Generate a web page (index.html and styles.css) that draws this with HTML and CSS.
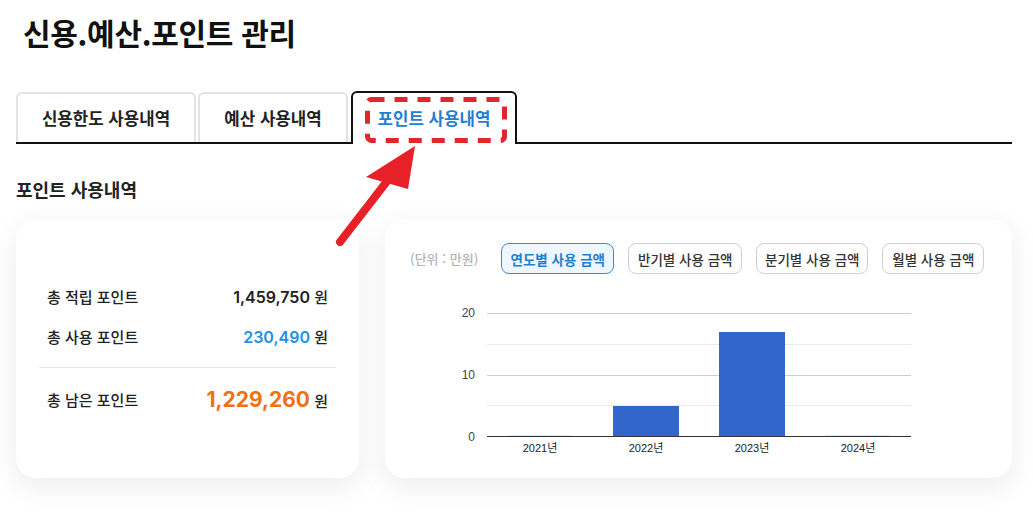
FILE: index.html
```html
<!DOCTYPE html>
<html lang="ko">
<head>
<meta charset="utf-8">
<title>신용.예산.포인트 관리</title>
<link rel="stylesheet" href="styles.css">
</head>
<body>
<div class="page">
  <h1 class="title">신용.예산.포인트 관리</h1>

  <div class="tabs">
    <div class="tab">신용한도 사용내역</div>
    <div class="tab tab-2">예산 사용내역</div>
    <div class="tab tab-active">포인트 사용내역
      <svg class="highlight" width="142" height="46" viewBox="0 0 142 46"><rect x="2.5" y="2.5" width="137" height="41" rx="4" ry="4" fill="none" stroke="#e3262b" stroke-width="5" stroke-dasharray="13 10"/></svg>
    </div>
  </div>

  <svg class="arrow" width="100" height="115" viewBox="0 0 100 115">
    <line x1="10" y1="102" x2="58" y2="40" stroke="#e82027" stroke-width="8" stroke-linecap="round"/>
    <polygon points="85,6 36,37 78,49" fill="#e82027"/>
  </svg>

  <h2 class="section-title">포인트 사용내역</h2>

  <div class="cards">
    <div class="card summary">
      <div class="row">
        <span class="label">총 적립 포인트</span>
        <span class="value"><b>1,459,750</b> 원</span>
      </div>
      <div class="row">
        <span class="label">총 사용 포인트</span>
        <span class="value"><b class="blue">230,490</b> 원</span>
      </div>
      <div class="divider"></div>
      <div class="row row-total">
        <span class="label">총 남은 포인트</span>
        <span class="value"><b class="orange">1,229,260</b> 원</span>
      </div>
    </div>

    <div class="card chart-card">
      <div class="toolbar">
        <span class="unit">(단위 : 만원)</span>
        <button class="btn btn-active w1">연도별 사용 금액</button>
        <button class="btn w2">반기별 사용 금액</button>
        <button class="btn w3">분기별 사용 금액</button>
        <button class="btn w4">월별 사용 금액</button>
      </div>

      <div class="chart">
        <div class="y-labels">
          <span>20</span>
          <span>10</span>
          <span>0</span>
        </div>
        <div class="plot">
          <div class="gridlines">
            <div class="band major"></div>
            <div class="band minor"></div>
            <div class="band major"></div>
            <div class="band minor"></div>
          </div>
          <div class="bars">
            <div class="bar zero"></div>
            <div class="bar" style="height:30px"></div>
            <div class="bar" style="height:104px"></div>
            <div class="bar zero"></div>
          </div>
        </div>
        <div></div>
        <div class="x-labels">
          <span>2021년</span>
          <span>2022년</span>
          <span>2023년</span>
          <span>2024년</span>
        </div>
      </div>
    </div>
  </div>
</div>
</body>
</html>
```

FILE: styles.css
```css
* { box-sizing: border-box; }

html, body {
  margin: 0;
  background: #ffffff;
}

body {
  font-family: "Inter", "Noto Sans CJK KR", sans-serif;
  color: #222;
}

.page {
  position: relative;
  padding: 0 21px 36px 16px;
}

.title {
  margin: 0 0 0 7px;
  padding-top: 12px;
  font-family: "Noto Sans CJK KR", sans-serif;
  font-size: 30px;
  line-height: 40px;
  font-weight: 700;
  color: #111;
  letter-spacing: -0.3px;
}

.tabs {
  margin-top: 40px;
  display: flex;
  align-items: flex-end;
  gap: 2px;
  height: 52px;
  border-bottom: 2px solid #111;
}

.tab {
  width: 180px;
  height: 50px;
  display: flex;
  align-items: center;
  justify-content: center;
  border: 2px solid #e2e2e2;
  border-bottom: none;
  border-radius: 6px 6px 0 0;
  font-family: "Noto Sans CJK KR", sans-serif;
  font-size: 16.8px;
  font-weight: 600;
  color: #222;
  background: #fff;
}

.tab-2 { width: 150px; }

.tab-active {
  position: relative;
  width: 166px;
  height: 53px;
  margin-left: 1px;
  margin-bottom: -2px;
  padding-bottom: 2px;
  border-color: #111;
  color: #1f80d2;
}

.highlight {
  position: absolute;
  left: 12px;
  top: 4px;
}

.arrow {
  position: absolute;
  left: 330px;
  top: 140px;
}

.section-title {
  margin: 33px 0 0 0;
  font-family: "Noto Sans CJK KR", sans-serif;
  font-size: 18px;
  line-height: 24px;
  font-weight: 700;
  color: #222;
}

.cards {
  margin-top: 18px;
  display: flex;
  gap: 26px;
}

.card {
  height: 259px;
  background: #fff;
  border-radius: 20px;
  box-shadow: 0 8px 30px rgba(0, 0, 0, 0.08);
}

.summary {
  width: 343px;
  padding: 57px 23px 0;
}

.row {
  height: 40px;
  padding: 0 8px;
  display: flex;
  align-items: center;
  justify-content: space-between;
}

.label {
  font-family: "Noto Sans CJK KR", sans-serif;
  font-size: 15px;
  font-weight: 500;
  color: #222;
}

.value {
  font-family: "Noto Sans CJK KR", sans-serif;
  font-size: 15px;
  font-weight: 500;
  color: #222;
}

.value b {
  font-family: "Inter", sans-serif;
  font-size: 16px;
  font-weight: 600;
  color: #222;
}

.value b.blue { color: #2191e6; }

.value b.orange {
  color: #f07114;
  font-size: 21px;
  font-weight: 700;
}

.divider {
  margin-top: 11px;
  border-top: 1px solid #e6e6e6;
}

.row-total { height: 62px; }

.chart-card {
  width: 627px;
  padding: 24px 25px 0;
}

.toolbar {
  display: flex;
  align-items: center;
  gap: 14px;
  height: 31px;
}

.unit {
  margin-right: 9px;
  font-family: "Noto Sans CJK KR", sans-serif;
  font-size: 13px;
  font-weight: 500;
  color: #b5b5b5;
}

.btn {
  height: 31px;
  padding: 0;
  border: 1px solid #cfcfcf;
  border-radius: 8px;
  background: #fff;
  font-family: "Noto Sans CJK KR", sans-serif;
  font-size: 13.5px;
  font-weight: 500;
  color: #333;
}

.w1 { width: 113px; }
.w2 { width: 114px; }
.w3 { width: 112px; }
.w4 { width: 102px; }

.btn-active {
  border-color: #3b8bd2;
  background: #eef7ff;
  color: #1f80d2;
  font-weight: 600;
}

.chart {
  margin-top: 39px;
  display: grid;
  grid-template-columns: 65px 424px;
  column-gap: 12px;
}

.y-labels {
  margin: -8px 0;
  height: 140px;
  display: flex;
  flex-direction: column;
  justify-content: space-between;
  align-items: flex-end;
  font-family: "Liberation Sans", sans-serif;
  font-size: 12px;
  line-height: 16px;
  color: #444;
}

.plot {
  display: grid;
  height: 124px;
  border-bottom: 1px solid #333;
}

.gridlines, .bars {
  grid-area: 1 / 1;
}

.gridlines {
  display: flex;
  flex-direction: column;
}

.band {
  flex: 1;
  border-top: 1px solid #cccccc;
}

.band.minor { border-top-color: #ebebeb; }

.bars {
  display: grid;
  grid-template-columns: repeat(4, 1fr);
  align-items: end;
  justify-items: center;
}

.bar {
  width: 66px;
  background: #3366cc;
}

.bar.zero {
  height: 1px;
  background: #dfe8f6;
}

.x-labels {
  display: grid;
  grid-template-columns: repeat(4, 1fr);
  justify-items: center;
  margin-top: 4px;
  font-family: "Liberation Sans", "Noto Sans CJK KR", sans-serif;
  font-size: 11px;
  line-height: 14px;
  color: #222;
}
```
